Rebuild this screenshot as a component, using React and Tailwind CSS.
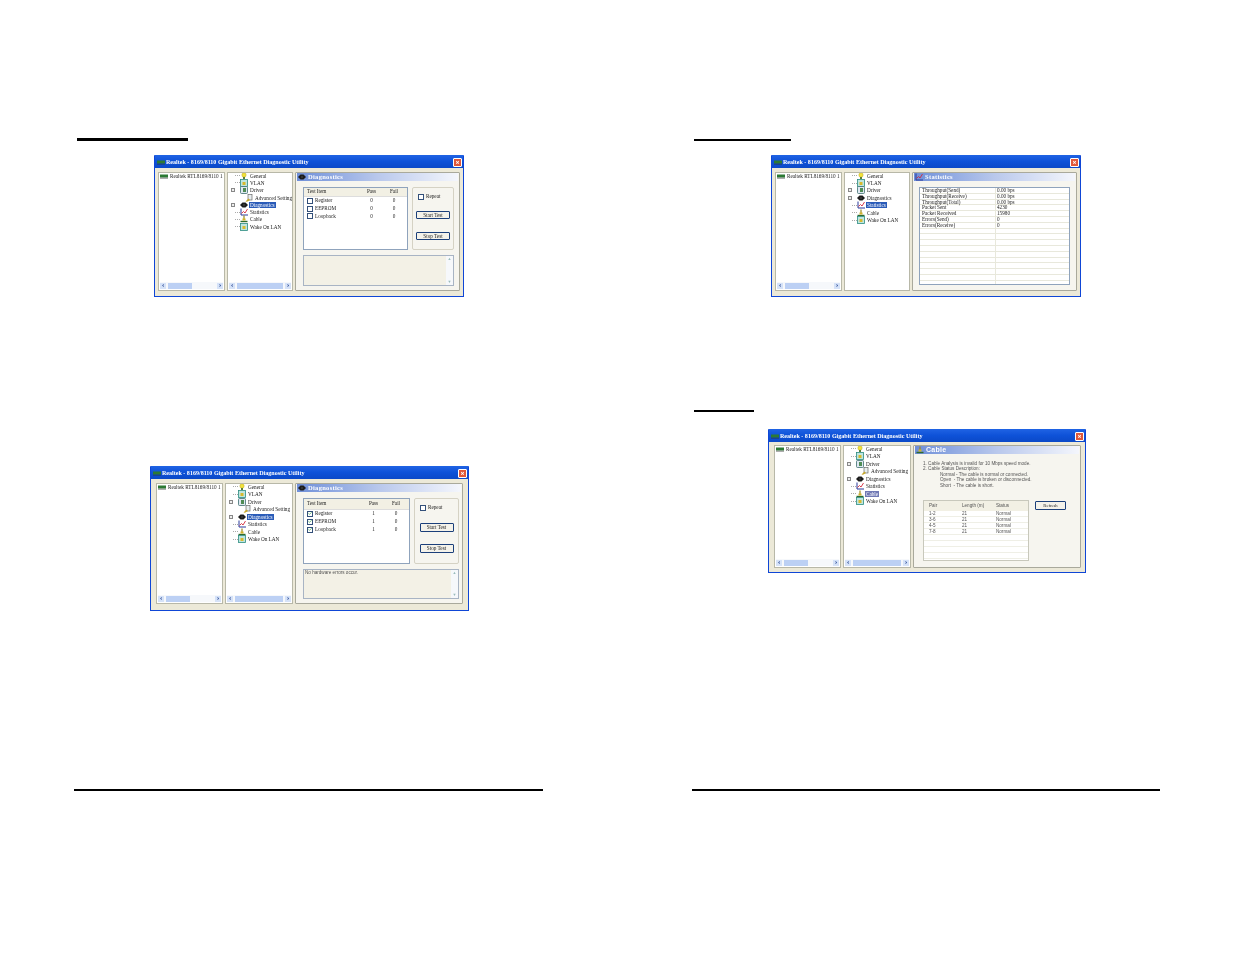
import { Check } from "lucide-react";

const TITLE = "Realtek - 8169/8110 Gigabit Ethernet Diagnostic Utility";
const DEVICE = "Realtek RTL8169/8110 1";
const SERIF = "font-['Liberation_Serif',serif]";
const SANS = "font-['Liberation_Sans',sans-serif]";

function Icon({ kind, className = "w-[8px] h-[8px]" }) {
  const common = { viewBox: "0 0 8 8", className: `${className} shrink-0` };
  if (kind === "bulb")
    return (
      <svg {...common}>
        <circle cx="4" cy="3" r="2.2" fill="#f2e23c" stroke="#a89a20" strokeWidth="0.4" />
        <rect x="3" y="5" width="2" height="2" fill="#5a7d3a" />
      </svg>
    );
  if (kind === "box")
    return (
      <svg {...common}>
        <rect x="0.5" y="0.5" width="7" height="7" fill="#bfe6e0" stroke="#2c8c80" strokeWidth="0.8" />
        <rect x="2.5" y="3" width="3" height="3" fill="#d8b92e" />
      </svg>
    );
  if (kind === "driver")
    return (
      <svg {...common}>
        <rect x="0.5" y="0.5" width="7" height="7" rx="1" fill="#dfe8f2" stroke="#3d6f70" strokeWidth="0.8" />
        <rect x="3" y="2" width="3" height="4" fill="#4f8c54" />
      </svg>
    );
  if (kind === "advanced")
    return (
      <svg {...common}>
        <rect x="3" y="0.5" width="4" height="5.5" fill="#e8eef0" stroke="#555" strokeWidth="0.6" />
        <path d="M0.5 7.5 L3.5 4.5 L5 6 L2 7.8 Z" fill="#c9a92a" />
      </svg>
    );
  if (kind === "diag")
    return (
      <svg {...common}>
        <path d="M0 4 L2.5 1.5 H5.5 L8 4 L5.5 6.5 H2.5 Z" fill="#1c1c1c" />
        <circle cx="4" cy="4" r="0.8" fill="#555" />
      </svg>
    );
  if (kind === "stats")
    return (
      <svg {...common}>
        <path d="M1 0.5 V7 H8" fill="none" stroke="#2b3a9c" strokeWidth="1" />
        <path d="M1.5 5.5 L3.5 3.5 L5 5 L7.5 1" fill="none" stroke="#d2283c" strokeWidth="0.9" />
      </svg>
    );
  if (kind === "cable")
    return (
      <svg {...common}>
        <rect x="3.4" y="0.5" width="1.2" height="4" fill="#9a8a20" />
        <path d="M0.5 6.5 H7.5" stroke="#2e6b2e" strokeWidth="1.4" />
        <rect x="2.5" y="3.5" width="3" height="2" fill="#d4b32a" />
      </svg>
    );
  // tarjeta de red del panel izquierdo
  return (
    <svg viewBox="0 0 8 5" className="w-[8px] h-[5px] shrink-0">
      <rect y="0.5" width="8" height="3" fill="#2c7a34" />
      <path d="M1 3.5 V5 M3 3.5 V5 M5 3.5 V5 M7 3.5 V5" stroke="#333" strokeWidth="0.8" />
    </svg>
  );
}

function Scrollbar({ thumb }) {
  return (
    <div className="h-[7px] mx-[1px] mb-[1px] flex items-center justify-between bg-[#f6f8fb] mt-auto">
      <div className="w-[6px] h-[6px] bg-[#d5e2f8] text-[#1f3f8c] font-bold text-[6px] leading-[5px] text-center">‹</div>
      <div className="flex-1 flex h-[6px] px-[2px]">
        <div className={`${thumb} h-[6px] bg-[#bcd0f4]`} />
      </div>
      <div className="w-[6px] h-[6px] bg-[#d5e2f8] text-[#1f3f8c] font-bold text-[6px] leading-[5px] text-center">›</div>
    </div>
  );
}

function DevicePane({ width }) {
  return (
    <div className={`${width} shrink-0 bg-white border border-[#b8b8a8] flex flex-col`}>
      <div className={`flex items-center gap-[2px] pl-[1px] ${SERIF} text-[5.2px] leading-[6px] whitespace-nowrap overflow-hidden text-[#222]`}>
        <Icon kind="nic" />
        <span>{DEVICE}</span>
      </div>
      <Scrollbar thumb="w-[24px]" />
    </div>
  );
}

function TreePane({ width, selected, rowH, expanded = true, showScroll = true, muted = false }) {
  const rows = [
    ["General", "bulb"],
    ["VLAN", "box"],
    ["Driver", "driver", true],
    ...(expanded ? [["Advanced Setting", "advanced", false, true]] : []),
    ["Diagnostics", "diag", true],
    ["Statistics", "stats"],
    ["Cable", "cable"],
    ["Wake On LAN", "box"],
  ];
  return (
    <div className={`${width} shrink-0 bg-white border border-[#b8b8a8] flex flex-col overflow-hidden`}>
      <div className={`pl-[1px] -mt-[1px] ${SERIF} text-[5.2px] text-[#222]`}>
        {rows.map(([label, icon, exp, child]) => (
          <div key={label} className={`${rowH} flex items-center whitespace-nowrap ${child ? "pl-[16px]" : "pl-[1px]"}`}>
            {!child && (
              <div className="w-[10px] flex items-center shrink-0">
                {exp ? <div className="w-[4px] h-[4px] ml-[1px] border-[0.5px] border-[#888] bg-[#eee]" /> : <div className="w-[5px] ml-[5px] border-t border-dotted border-[#aaa]" />}
              </div>
            )}
            <Icon kind={icon} />
            <span
              className={`ml-[1px] px-[1px] leading-[6px] ${
                label === selected ? (muted ? "bg-[#6f78b4] text-white" : "bg-[#2a5bb8] text-white") : ""
              }`}
            >
              {label}
            </span>
          </div>
        ))}
      </div>
      {showScroll && <Scrollbar thumb="w-full" />}
    </div>
  );
}

function PanelHeader({ icon, title, sans = false }) {
  return (
    <div className="h-[8px] mx-[1px] flex items-center gap-[2px] pl-[1px] bg-gradient-to-r from-[#6f8fd8] via-[#b9c8ec] to-[#f4f6fc]">
      <Icon kind={icon} />
      <span className={`text-white font-bold tracking-[0.3px] ${sans ? `${SANS} text-[7px]` : `${SERIF} text-[6.5px]`} leading-[8px]`}>{title}</span>
    </div>
  );
}

function Panel({ children, className = "" }) {
  return <div className={`flex-1 bg-[#f6f5ef] border border-[#a9a99c] rounded-[1px] flex flex-col ${className}`}>{children}</div>;
}

function Window({ className, body, children }) {
  return (
    <div className={`${className} shrink-0 bg-[#ece9d8] border-x-[1.5px] border-b-[1.5px] border-[#0f46d6] rounded-t-[1px] flex flex-col blur-[0.4px]`}>
      <div className="h-[13px] shrink-0 flex items-center pl-[2px] pr-[1px] pt-[2px] bg-gradient-to-b from-[#1f63e4] via-[#0e52d8] to-[#0b49c8]">
        <Icon kind="nic" />
        <span className={`ml-[1px] ${SERIF} font-bold text-[6.05px] text-white whitespace-nowrap`}>{TITLE}</span>
        <div className="ml-auto w-[9px] h-[9px] bg-[#e0583a] border-[0.5px] border-white rounded-[1px] text-white text-[7px] leading-[8px] text-center font-bold">×</div>
      </div>
      <div className={`flex-1 flex gap-[2px] ${body}`}>{children}</div>
    </div>
  );
}

function CheckBox({ checked }) {
  return (
    <div className="w-[6px] h-[6px] border-[0.5px] border-[#33507a] bg-white flex items-center justify-center shrink-0">
      {checked && <Check className="w-[5px] h-[5px] text-[#2c9a3c]" strokeWidth={4} />}
    </div>
  );
}

function Button({ label, className = "" }) {
  return (
    <div className={`${className} border border-[#1b3f7a] rounded-[1px] bg-[#f4f2ea] text-center ${SERIF} text-[5.2px] leading-[7px] text-[#222]`}>{label}</div>
  );
}

function DiagnosticsContent({ passed, listH, groupW, logH, log, startBtn, stopBtn, rowH, headH, inset }) {
  const items = ["Register", "EEPROM", "Loopback"];
  return (
    <Panel>
      <PanelHeader icon="diag" title="Diagnostics" />
      <div className={`pl-[7px] ${inset} pt-[6px] ${SERIF} text-[5.2px] text-[#222]`}>
        <div className={`flex gap-[4px] ${listH}`}>
          <div className="flex-1 bg-white border border-[#8fa3bc]">
            <div className={`${headH} flex items-center bg-[#f2f0e4] border-b border-[#ddd]`}>
              <span className="flex-1 pl-[3px]">Test Item</span>
              <span className="w-[19px] text-center">Pass</span>
              <span className="w-[26px] text-center">Fail</span>
            </div>
            {items.map((item) => (
              <div key={item} className={`${rowH} flex items-center`}>
                <div className="flex-1 flex items-center gap-[2px] pl-[3px]">
                  <CheckBox checked={passed} />
                  <span>{item}</span>
                </div>
                <span className="w-[19px] text-center">{passed ? 1 : 0}</span>
                <span className="w-[26px] text-center">0</span>
              </div>
            ))}
          </div>
          <div className={`${groupW} border border-[#d5d2c4] rounded-[2px] flex flex-col items-center pt-[5px]`}>
            <div className="flex items-center gap-[2px] self-start pl-[5px]">
              <CheckBox />
              <span>Repeat</span>
            </div>
            <Button label="Start Test" className={startBtn} />
            <Button label="Stop Test" className={stopBtn} />
          </div>
        </div>
        <div className={`mt-[5px] ${logH} border border-[#a8b4c4] bg-[#f3f1e6] flex`}>
          <span className={`flex-1 pl-[1px] ${SANS} text-[4.6px] text-[#555]`}>{log}</span>
          <div className="w-[7px] bg-[#f6f8fb] flex flex-col justify-between items-center text-[#9bb] text-[4px]">
            <span>▲</span>
            <span>▼</span>
          </div>
        </div>
      </div>
    </Panel>
  );
}

function StatisticsContent() {
  const rows = [
    ["Throughput(Send)", "0.00 bps"],
    ["Throughput(Receive)", "0.00 bps"],
    ["Throughput(Total)", "0.00 bps"],
    ["Packet Sent", "4230"],
    ["Packet Received", "15980"],
    ["Errors(Send)", "0"],
    ["Errors(Receive)", "0"],
    ...Array.from({ length: 10 }, () => ["", ""]),
  ];
  return (
    <Panel>
      <PanelHeader icon="stats" title="Statistics" />
      <div className={`mx-[6px] mt-[6px] h-[98px] overflow-hidden bg-white border border-[#8fa3bc] ${SERIF} text-[5.2px] text-[#222]`}>
        {rows.map(([name, value], i) => (
          <div key={i} className="h-[5.8px] flex border-b border-[#e8e8dc] leading-[4.8px]">
            <span className="w-[76px] pl-[2px] border-r border-[#e8e8dc]">{name}</span>
            <span className="pl-[1px]">{value}</span>
          </div>
        ))}
      </div>
    </Panel>
  );
}

function CableContent() {
  const rows = [
    ["1-2", "21", "Normal"],
    ["3-6", "21", "Normal"],
    ["4-5", "21", "Normal"],
    ["7-8", "21", "Normal"],
    ["", "", ""],
    ["", "", ""],
    ["", "", ""],
    ["", "", ""],
  ];
  return (
    <Panel>
      <PanelHeader icon="cable" title="Cable" sans />
      <div className={`pl-[9px] pt-[7px] ${SANS} text-[4.6px] leading-[5.4px] text-[#555]`}>
        <p>1. Cable Analysis is invalid for 10 Mbps speed mode.</p>
        <p>2. Cable Status Description:</p>
        <p className="pl-[17px]">Normal - The cable is normal or connected.</p>
        <p className="pl-[17px]">Open &nbsp;- The cable is broken or disconnected.</p>
        <p className="pl-[17px]">Short &nbsp;- The cable is short.</p>
        <div className="flex mt-[12px] items-start">
          <div className="w-[106px] h-[61px] bg-white border border-[#c8c8bc]">
            <div className="h-[10px] flex items-center bg-[#f2f0e4]">
              <span className="w-[35px] pl-[5px]">Pair</span>
              <span className="w-[36px] pl-[3px]">Length (m)</span>
              <span className="pl-[1px]">Status</span>
            </div>
            {rows.map(([pair, len, status], i) => (
              <div key={i} className="h-[6px] flex items-center border-b border-[#efefe6]">
                <span className="w-[35px] pl-[5px]">{pair}</span>
                <span className="w-[36px] pl-[3px]">{len}</span>
                <span className="pl-[1px]">{status}</span>
              </div>
            ))}
          </div>
          <Button label="Refresh" className={`ml-[6px] mt-[1px] w-[31px] h-[9px] ${SANS} !text-[4.6px]`} />
        </div>
      </div>
    </Panel>
  );
}

export default function App() {
  return (
    <div className="w-[1235px] h-[954px] bg-white flex overflow-hidden">
      <div className="w-[617px] shrink-0 flex flex-col">
        <div className="ml-[77px] mt-[138px] w-[111px] h-[3px] bg-black" />
        <Window className="ml-[154px] mt-[14px] w-[310px] h-[142px]" body="px-[3px] pt-[4px] pb-[5px]">
          <DevicePane width="w-[67px]" />
          <TreePane width="w-[66px]" selected="Diagnostics" rowH="h-[7.3px]" />
          <DiagnosticsContent
            inset="pr-[5px]"
            listH="h-[63px]"
            groupW="w-[42px]"
            logH="h-[31px]"
            startBtn="w-[34px] h-[8px] mt-[10px]"
            stopBtn="w-[34px] h-[8px] mt-[13px]"
            headH="h-[9px]"
            rowH="h-[7.8px]"
          />
        </Window>
        <Window className="ml-[150px] mt-[169px] w-[319px] h-[145px]" body="pl-[5px] pr-[5px] pt-[4px] pb-[6px]">
          <DevicePane width="w-[67px]" />
          <TreePane width="w-[68px]" selected="Diagnostics" rowH="h-[7.5px]" />
          <DiagnosticsContent
            passed
            inset="pr-[3px]"
            listH="h-[66px]"
            groupW="w-[45px]"
            logH="h-[30px]"
            startBtn="w-[34px] h-[9px] mt-[11px]"
            stopBtn="w-[34px] h-[9px] mt-[12px]"
            headH="h-[11px]"
            rowH="h-[8px]"
            log="No hardware errors occur."
          />
        </Window>
        <div className="ml-[74px] mt-[178px] w-[469px] h-[2px] bg-black" />
      </div>
      <div className="flex-1 flex flex-col">
        <div className="ml-[77px] mt-[139px] w-[97px] h-[2px] bg-black" />
        <Window className="ml-[154px] mt-[14px] w-[310px] h-[142px]" body="px-[3px] pt-[4px] pb-[5px]">
          <DevicePane width="w-[67px]" />
          <TreePane width="w-[66px]" selected="Statistics" rowH="h-[7.4px]" expanded={false} showScroll={false} />
          <StatisticsContent />
        </Window>
        <div className="ml-[77px] mt-[113px] w-[60px] h-[2px] bg-black" />
        <Window className="ml-[151px] mt-[17px] w-[318px] h-[144px]" body="pl-[5px] pr-[4px] pt-[3px] pb-[4px]">
          <DevicePane width="w-[67px]" />
          <TreePane width="w-[68px]" selected="Cable" rowH="h-[7.5px]" muted />
          <CableContent />
        </Window>
        <div className="ml-[75px] mt-[216px] w-[468px] h-[2px] bg-black" />
      </div>
    </div>
  );
}
